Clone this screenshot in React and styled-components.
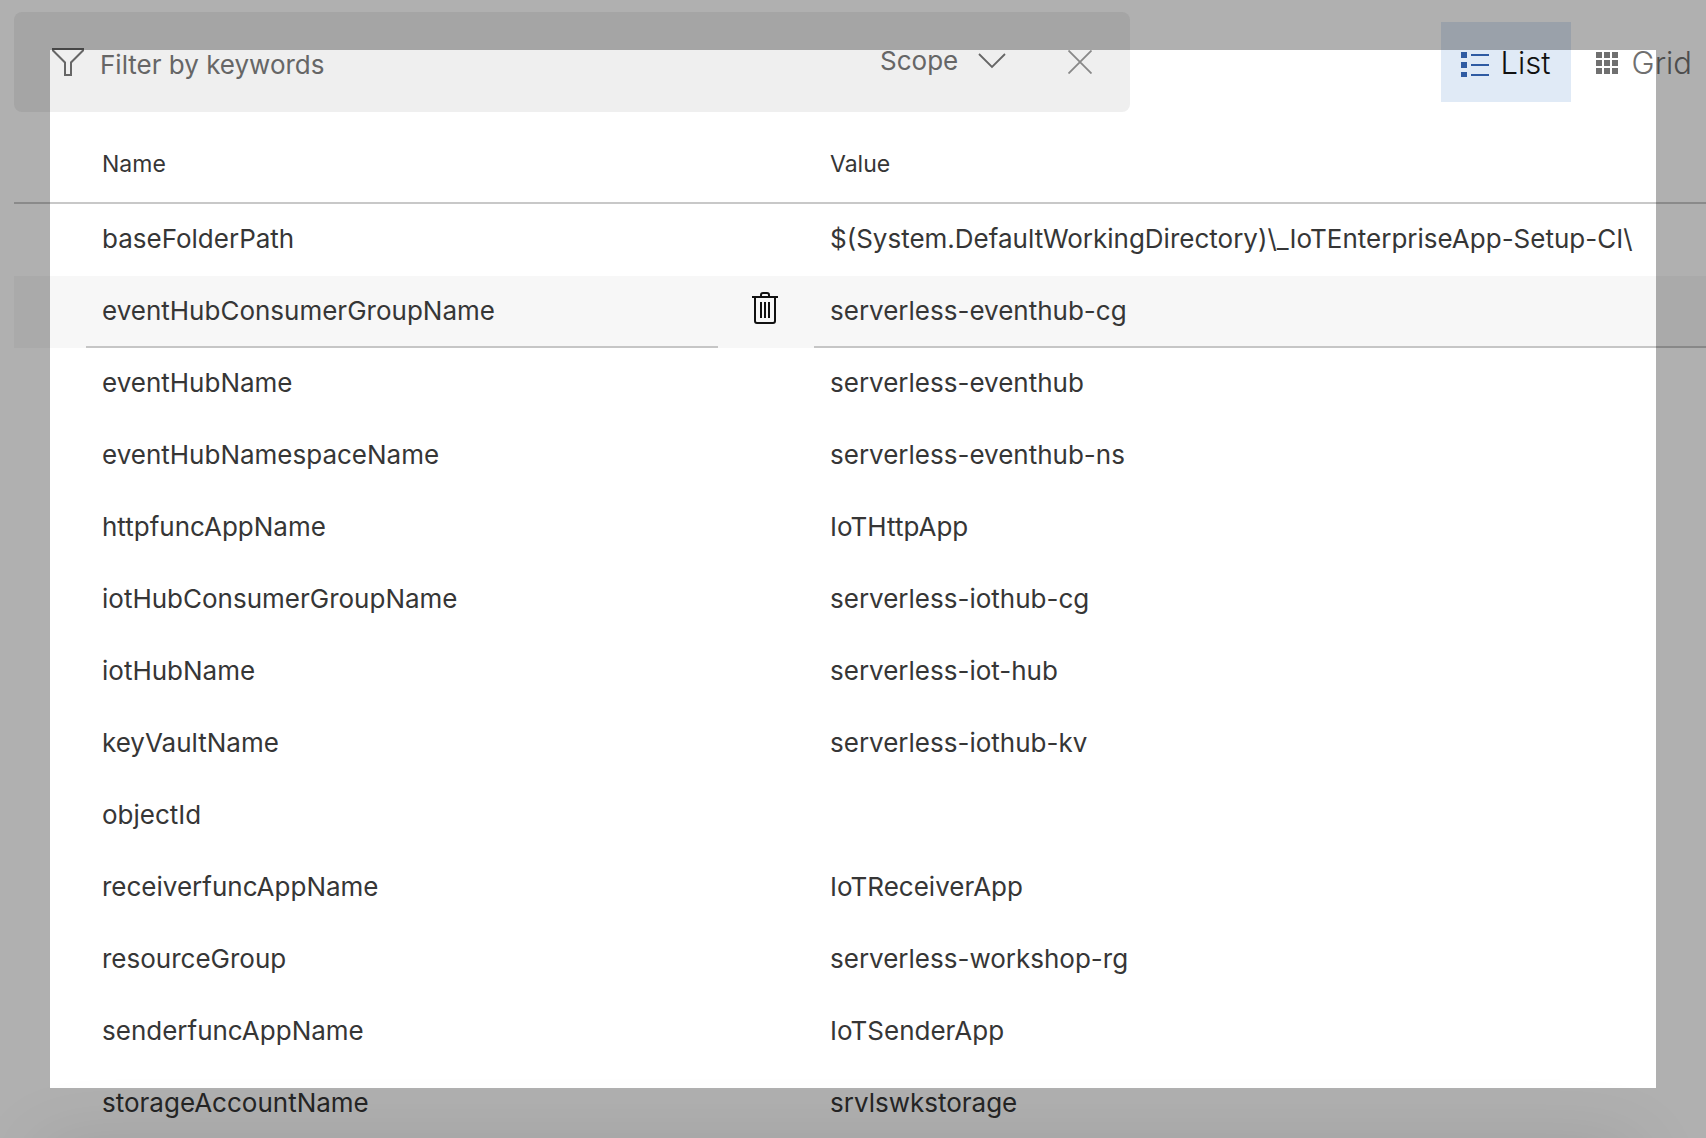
import React from "react";
import styled, { createGlobalStyle } from "styled-components";

const GlobalStyle = createGlobalStyle`
  * { box-sizing: border-box; }
  body {
    margin: 0;
    background: #fff;
    overflow: hidden;
    font-family: Inter, "Liberation Sans", sans-serif;
  }
  button, input, select { font: inherit; color: inherit; }
`;

const Page = styled.main`
  min-height: 100vh;
  padding: 12px 0 0 14px;
  color: #363636;
  font-size: 26px;
`;

const Toolbar = styled.header`
  display: flex;
  align-items: flex-start;
  justify-content: space-between;
`;

const FilterBar = styled.div`
  display: flex;
  align-items: center;
  flex: 0 1 1116px;
  height: 100px;
  padding: 0 38px;
  border-radius: 8px;
  background: #efefef;
  color: #666;
`;

const FilterInput = styled.input`
  flex: 1;
  min-width: 0;
  height: 72px;
  margin-left: 16px;
  padding: 4px 0 0;
  border: 0;
  background: transparent;
  outline: none;
  &::placeholder { color: #666; opacity: 1; }
`;

const ScopeField = styled.div`
  display: grid;
  align-items: center;
  width: 126px;
  margin-right: 62px;
  & > * { grid-area: 1 / 1; }
  & > svg { justify-self: end; pointer-events: none; }
`;

const ScopeSelect = styled.select`
  appearance: none;
  width: 100%;
  height: 72px;
  padding: 0 0 4px;
  border: 0;
  background: transparent;
`;

const IconButton = styled.button`
  display: flex;
  padding: 0;
  border: 0;
  background: transparent;
  color: ${(p) => p.$color};
`;

const Toggles = styled.div`
  display: flex;
  padding: 10px 0 0;
`;

const ToggleButton = styled.button`
  display: flex;
  align-items: center;
  gap: ${(p) => (p.$active ? 12 : 14)}px;
  height: 80px;
  padding: 0 ${(p) => (p.$active ? 20 : 14)}px 0 ${(p) => (p.$active ? 20 : 25)}px;
  border: 0;
  background: ${(p) => (p.$active ? "#e0eaf6" : "transparent")};
  color: ${(p) => (p.$active ? "#111" : "#707070")};
  font-size: 31px;
  font-weight: 300;
  & > svg { flex: none; color: ${(p) => (p.$active ? "#2f5ba2" : "#707070")}; }
`;

const Table = styled.table`
  width: 100%;
  table-layout: fixed;
  border-collapse: separate;
  border-spacing: 0;
`;

const NameCol = styled.col`width: 704px;`;
const ActionCol = styled.col`width: 96px;`;

const HeadCell = styled.th`
  height: 92px;
  padding: 14px 0 0 ${(p) => p.$indent}px;
  border-bottom: 2px solid #c8c8c8;
  text-align: left;
  vertical-align: middle;
  font-size: 23px;
  font-weight: 400;
`;

const Row = styled.tr`
  background: ${(p) => (p.$active ? "#f7f7f7" : "transparent")};
`;

const Cell = styled.td`
  height: 72px;
  padding: 0 0 0 ${(p) => p.$indent || 0}px;
`;

const ActionCell = styled(Cell)`
  padding: 0 0 8px 34px;
`;

const CellInput = styled.input`
  display: block;
  width: 100%;
  height: 72px;
  padding: 0 16px 2px;
  border: 0;
  border-bottom: 2px solid ${(p) => (p.$active ? "#c6c6c6" : "transparent")};
  background: transparent;
  outline: none;
`;

const BottomShade = styled.div`
  position: fixed;
  left: 40px;
  right: 70px;
  top: calc(100vh + 8px);
  height: 60px;
  box-shadow: 0 0 76px rgba(0, 0, 0, 0.12);
  pointer-events: none;
`;

const Spotlight = styled.div`
  position: fixed;
  inset: 50px;
  box-shadow: 0 0 0 50px rgba(0, 0, 0, 0.31);
  pointer-events: none;
`;

const variables = [
  ["baseFolderPath", "$(System.DefaultWorkingDirectory)\\_IoTEnterpriseApp-Setup-CI\\"],
  ["eventHubConsumerGroupName", "serverless-eventhub-cg"],
  ["eventHubName", "serverless-eventhub"],
  ["eventHubNamespaceName", "serverless-eventhub-ns"],
  ["httpfuncAppName", "IoTHttpApp"],
  ["iotHubConsumerGroupName", "serverless-iothub-cg"],
  ["iotHubName", "serverless-iot-hub"],
  ["keyVaultName", "serverless-iothub-kv"],
  ["objectId", ""],
  ["receiverfuncAppName", "IoTReceiverApp"],
  ["resourceGroup", "serverless-workshop-rg"],
  ["senderfuncAppName", "IoTSenderApp"],
  ["storageAccountName", "srvlswkstorage"],
];

const activeName = "eventHubConsumerGroupName";

const FilterIcon = () => (
  <svg width="32" height="28" viewBox="0 0 32 28" fill="none" stroke="currentColor" strokeWidth="2" aria-hidden="true">
    <path d="M1 1H31V2.5L19 14.5V27H13V14.5L1 2.5Z" />
  </svg>
);

const ChevronIcon = () => (
  <svg width="28" height="18" viewBox="0 0 28 18" fill="none" stroke="currentColor" strokeWidth="1.8" aria-hidden="true">
    <path d="M1 1L14 14L27 1" />
  </svg>
);

const CloseIcon = () => (
  <svg width="24" height="24" viewBox="0 0 24 24" fill="none" stroke="currentColor" strokeWidth="1.8" aria-hidden="true">
    <path d="M0.5 0.5L23.5 23.5M23.5 0.5L0.5 23.5" />
  </svg>
);

const ListIcon = () => (
  <svg width="28" height="30" viewBox="0 0 28 30" fill="currentColor" aria-hidden="true">
    {[5, 15, 25].map((y) => (
      <path key={y} d={`M0 ${y}h6v6h-6zM10 ${y + 2}h18v2h-18z`} />
    ))}
  </svg>
);

const GridIcon = () => (
  <svg width="22" height="24" viewBox="0 0 22 24" fill="currentColor" aria-hidden="true">
    {[2, 10, 18].map((y) => (
      <path key={y} d={`M0 ${y}h6v6h-6zM8 ${y}h6v6h-6zM16 ${y}h6v6h-6z`} />
    ))}
  </svg>
);

const TrashIcon = () => (
  <svg width="26" height="32" viewBox="0 0 26 32" fill="none" stroke="currentColor" strokeWidth="2" aria-hidden="true">
    <path d="M0 5H26M9 5V3Q9 1 11 1H15Q17 1 17 3V5M3 5V29Q3 31 5 31H21Q23 31 23 29V5M9 10V26M13 10V26M17 10V26" />
  </svg>
);

export default function App() {
  return (
    <>
      <GlobalStyle />
      <Page>
        <Toolbar>
          <FilterBar role="search">
            <FilterIcon />
            <FilterInput type="text" placeholder="Filter by keywords" aria-label="Filter by keywords" />
            <ScopeField>
              <ScopeSelect aria-label="Scope">
                <option>Scope</option>
              </ScopeSelect>
              <ChevronIcon />
            </ScopeField>
            <IconButton type="button" $color="#888" aria-label="Clear filter">
              <CloseIcon />
            </IconButton>
          </FilterBar>
          <Toggles>
            <ToggleButton type="button" $active aria-pressed="true">
              <ListIcon />
              List
            </ToggleButton>
            <ToggleButton type="button" aria-pressed="false">
              <GridIcon />
              Grid
            </ToggleButton>
          </Toggles>
        </Toolbar>
        <Table>
          <colgroup>
            <NameCol />
            <ActionCol />
            <col />
          </colgroup>
          <thead>
            <tr>
              <HeadCell scope="col" colSpan={2} $indent={88}>Name</HeadCell>
              <HeadCell scope="col" $indent={16}>Value</HeadCell>
            </tr>
          </thead>
          <tbody>
            {variables.map(([name, value]) => {
              const active = name === activeName;
              return (
                <Row key={name} $active={active}>
                  <Cell $indent={72}>
                    <CellInput $active={active} defaultValue={name} aria-label={`Name of ${name}`} />
                  </Cell>
                  <ActionCell>
                    {active && (
                      <IconButton type="button" $color="#111" aria-label={`Delete ${name}`}>
                        <TrashIcon />
                      </IconButton>
                    )}
                  </ActionCell>
                  <Cell>
                    <CellInput $active={active} defaultValue={value} aria-label={`Value of ${name}`} />
                  </Cell>
                </Row>
              );
            })}
          </tbody>
        </Table>
      </Page>
      <BottomShade />
      <Spotlight />
    </>
  );
}
